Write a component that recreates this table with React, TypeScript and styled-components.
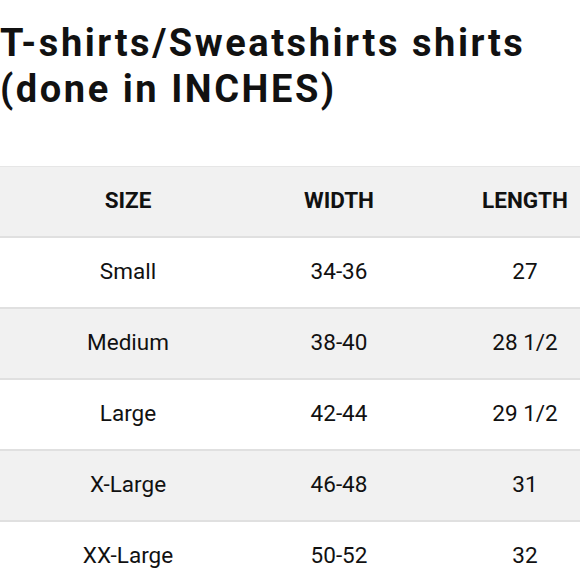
import styled, { createGlobalStyle } from "styled-components";

const GlobalStyle = createGlobalStyle`
  html, body {
    margin: 0;
    padding: 0;
    background: #ffffff;
  }
  body {
    width: 580px;
    height: 580px;
    overflow: hidden;
    font-family: Roboto, "Liberation Sans", sans-serif;
    color: #111111;
  }
`;

const Page = styled.div`
  width: 580px;
  height: 580px;
  overflow: hidden;
`;

const Title = styled.h1`
  margin: 0;
  padding: 20px 0 0 0;
  font-size: 38px;
  line-height: 46px;
  font-weight: 700;
  letter-spacing: 2.55px;
  color: #111111;
`;

const Table = styled.div`
  margin-top: 54px;
  width: 640px;
  border-top: 1px solid #e6e6e6;
`;

const Row = styled.div<{ shaded?: boolean }>`
  display: grid;
  grid-template-columns: 256px 166px 206px;
  height: 71px;
  padding-bottom: 3px;
  box-sizing: border-box;
  align-items: center;
  background: ${({ shaded }) => (shaded ? "#f1f1f1" : "#ffffff")};
  border-bottom: 2px solid #e0e0e0;
`;

const Cell = styled.div<{ head?: boolean }>`
  text-align: center;
  font-size: 22.5px;
  font-weight: ${({ head }) => (head ? 700 : 400)};
  color: #111111;
`;

interface SizeRow {
  size: string;
  width: string;
  length: string;
}

const rows: SizeRow[] = [
  { size: "Small", width: "34-36", length: "27" },
  { size: "Medium", width: "38-40", length: "28 1/2" },
  { size: "Large", width: "42-44", length: "29 1/2" },
  { size: "X-Large", width: "46-48", length: "31" },
  { size: "XX-Large", width: "50-52", length: "32" },
];

export default function App() {
  return (
    <Page>
      <GlobalStyle />
      <Title>
        T-shirts/Sweatshirts shirts
        <br />
        (done in INCHES)
      </Title>
      <Table>
        <Row shaded>
          <Cell head>SIZE</Cell>
          <Cell head>WIDTH</Cell>
          <Cell head>LENGTH</Cell>
        </Row>
        {rows.map((row, index) => (
          <Row key={row.size} shaded={index % 2 === 1}>
            <Cell>{row.size}</Cell>
            <Cell>{row.width}</Cell>
            <Cell>{row.length}</Cell>
          </Row>
        ))}
      </Table>
    </Page>
  );
}
